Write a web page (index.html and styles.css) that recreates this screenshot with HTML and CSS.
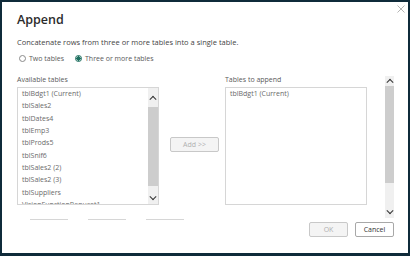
FILE: index.html
```html
<!DOCTYPE html>
<html lang="en">
<head>
  <meta charset="UTF-8">
  <title>Append</title>
  <link rel="stylesheet" href="styles.css">
</head>
<body>
  <div class="dialog">
    <button class="close" aria-label="Close">
      <svg viewBox="0 0 8 8"><path d="M0.5 0.5l7 7M7.5 0.5l-7 7"/></svg>
    </button>
    <h1 class="title">Append</h1>
    <p class="desc">Concatenate rows from three or more tables into a single table.</p>

    <div class="radios">
      <label class="radio"><span class="dot"></span>Two tables</label>
      <label class="radio checked"><span class="dot"></span>Three or more tables</label>
    </div>

    <div class="main">
      <div class="col">
        <div class="label">Available tables</div>
        <div class="listbox">
          <ul class="items">
            <li>tblBdgt1 (Current)</li>
            <li>tblSales2</li>
            <li>tblDates4</li>
            <li>tblEmp3</li>
            <li>tblProds5</li>
            <li>tblSnif6</li>
            <li>tblSales2 (2)</li>
            <li>tblSales2 (3)</li>
            <li>tblSuppliers</li>
            <li>VisionFunctionRequest1</li>
          </ul>
          <div class="scroll inner">
            <span class="arrow up"></span>
            <span class="track"><span class="thumb"></span></span>
            <span class="arrow down"></span>
          </div>
        </div>
      </div>

      <div class="middle">
        <button class="btn add" disabled>Add &gt;&gt;</button>
      </div>

      <div class="col">
        <div class="label">Tables to append</div>
        <div class="listbox">
          <ul class="items">
            <li>tblBdgt1 (Current)</li>
          </ul>
        </div>
      </div>

      <div class="scroll outer">
        <span class="arrow up"></span>
        <span class="track"><span class="thumb"></span></span>
        <span class="arrow down"></span>
      </div>
    </div>

    <div class="footer">
      <div class="stubs">
        <span></span><span></span><span></span>
      </div>
      <div class="actions">
        <button class="btn ok" disabled>OK</button>
        <button class="btn cancel">Cancel</button>
      </div>
    </div>
  </div>
</body>
</html>
```

FILE: styles.css
```css
:root {
  --frame: #0f2b3a;
  --text: #2b2b2b;
  --muted: #5a5a5a;
  --item: #6a6a6a;
  --line: #d6d6d6;
  --track: #f0f0f0;
  --thumb: #cdcdcd;
  --teal: #1d6f5f;
}

* {
  margin: 0;
  padding: 0;
  box-sizing: border-box;
}

body {
  width: 410px;
  height: 256px;
  overflow: hidden;
  font-family: "Open Sans", "Noto Sans", sans-serif;
  background: var(--frame);
}

.dialog {
  position: relative;
  width: 410px;
  height: 256px;
  background: #ffffff;
  border: 2px solid var(--frame);
  border-bottom-width: 3px;
  padding: 0 14px 0 15px;
}

.close {
  position: absolute;
  top: 3px;
  right: 3px;
  width: 8px;
  height: 8px;
  border: none;
  background: none;
}

.close svg {
  display: block;
  width: 8px;
  height: 8px;
  stroke: #b5b5b5;
  stroke-width: 1;
  fill: none;
}

.title {
  margin-top: 9px;
  font-size: 12.5px;
  line-height: 18px;
  font-weight: 600;
  color: var(--text);
}

.desc {
  margin-top: 7px;
  font-size: 7.5px;
  line-height: 12px;
  color: #444444;
}

.radios {
  display: flex;
  gap: 9px;
  margin-top: 5px;
  height: 10px;
  align-items: center;
}

.radio {
  display: flex;
  align-items: center;
  gap: 3px;
  font-size: 7px;
  color: var(--muted);
}

.radio .dot {
  width: 7px;
  height: 7px;
  margin-left: 2px;
  border: 1px solid #8a8a8a;
  border-radius: 50%;
}

.radio.checked .dot {
  border-color: var(--teal);
  background: radial-gradient(circle, var(--teal) 0 2px, #ffffff 2.3px);
}

.main {
  display: flex;
  margin-top: 13px;
  height: 142px;
}

.col {
  width: 142px;
  display: flex;
  flex-direction: column;
}

.label {
  height: 11px;
  font-size: 7px;
  line-height: 8px;
  color: var(--muted);
}

.listbox {
  position: relative;
  display: flex;
  height: 118px;
  border: 1px solid var(--line);
  overflow: hidden;
}

.items {
  flex: 1;
  list-style: none;
  padding-left: 4px;
}

.items li {
  height: 12.33px;
  font-size: 7px;
  line-height: 12.33px;
  color: var(--item);
  white-space: nowrap;
}

.scroll {
  display: flex;
  flex-direction: column;
  background: var(--track);
}

.scroll.inner {
  width: 10px;
}

.scroll.outer {
  width: 9px;
  margin-left: 18px;
}

.arrow {
  position: relative;
  height: 12px;
}

.arrow::before {
  content: "";
  position: absolute;
  left: 50%;
  top: 50%;
  width: 4px;
  height: 4px;
  border-left: 1.3px solid #333333;
  border-top: 1.3px solid #333333;
  transform: translate(-50%, -25%) rotate(45deg);
}

.arrow.down::before {
  transform: translate(-50%, -75%) rotate(225deg);
}

.track {
  flex: 1;
  display: flex;
  flex-direction: column;
}

.inner .arrow.up {
  height: 19px;
}

.inner .track {
  padding-bottom: 6px;
}

.inner .arrow.down {
  height: 12px;
}

.outer .arrow.up {
  height: 10px;
}

.outer .track {
  padding-bottom: 22px;
}

.outer .arrow.down {
  height: 13px;
}

.thumb {
  flex: 1;
  background: var(--thumb);
}

.middle {
  width: 66px;
  padding: 54px 6px 0 11px;
}

.btn {
  height: 15px;
  border: 1px solid #c8c8c8;
  border-radius: 2px;
  background: #f4f4f4;
  font-family: inherit;
  font-size: 7px;
  color: #b0b0b0;
}

.add {
  width: 49px;
}

.footer {
  display: flex;
  justify-content: space-between;
  height: 19px;
}

.stubs {
  display: flex;
  gap: 20px;
  padding: 1px 0 0 13px;
}

.stubs span {
  width: 38px;
  height: 1px;
  background: var(--line);
}

.actions {
  display: flex;
  gap: 7px;
  padding-top: 4px;
}

.ok,
.cancel {
  width: 39px;
}

.cancel {
  background: #ffffff;
  border-color: #a8a8a8;
  color: #333333;
}
```
